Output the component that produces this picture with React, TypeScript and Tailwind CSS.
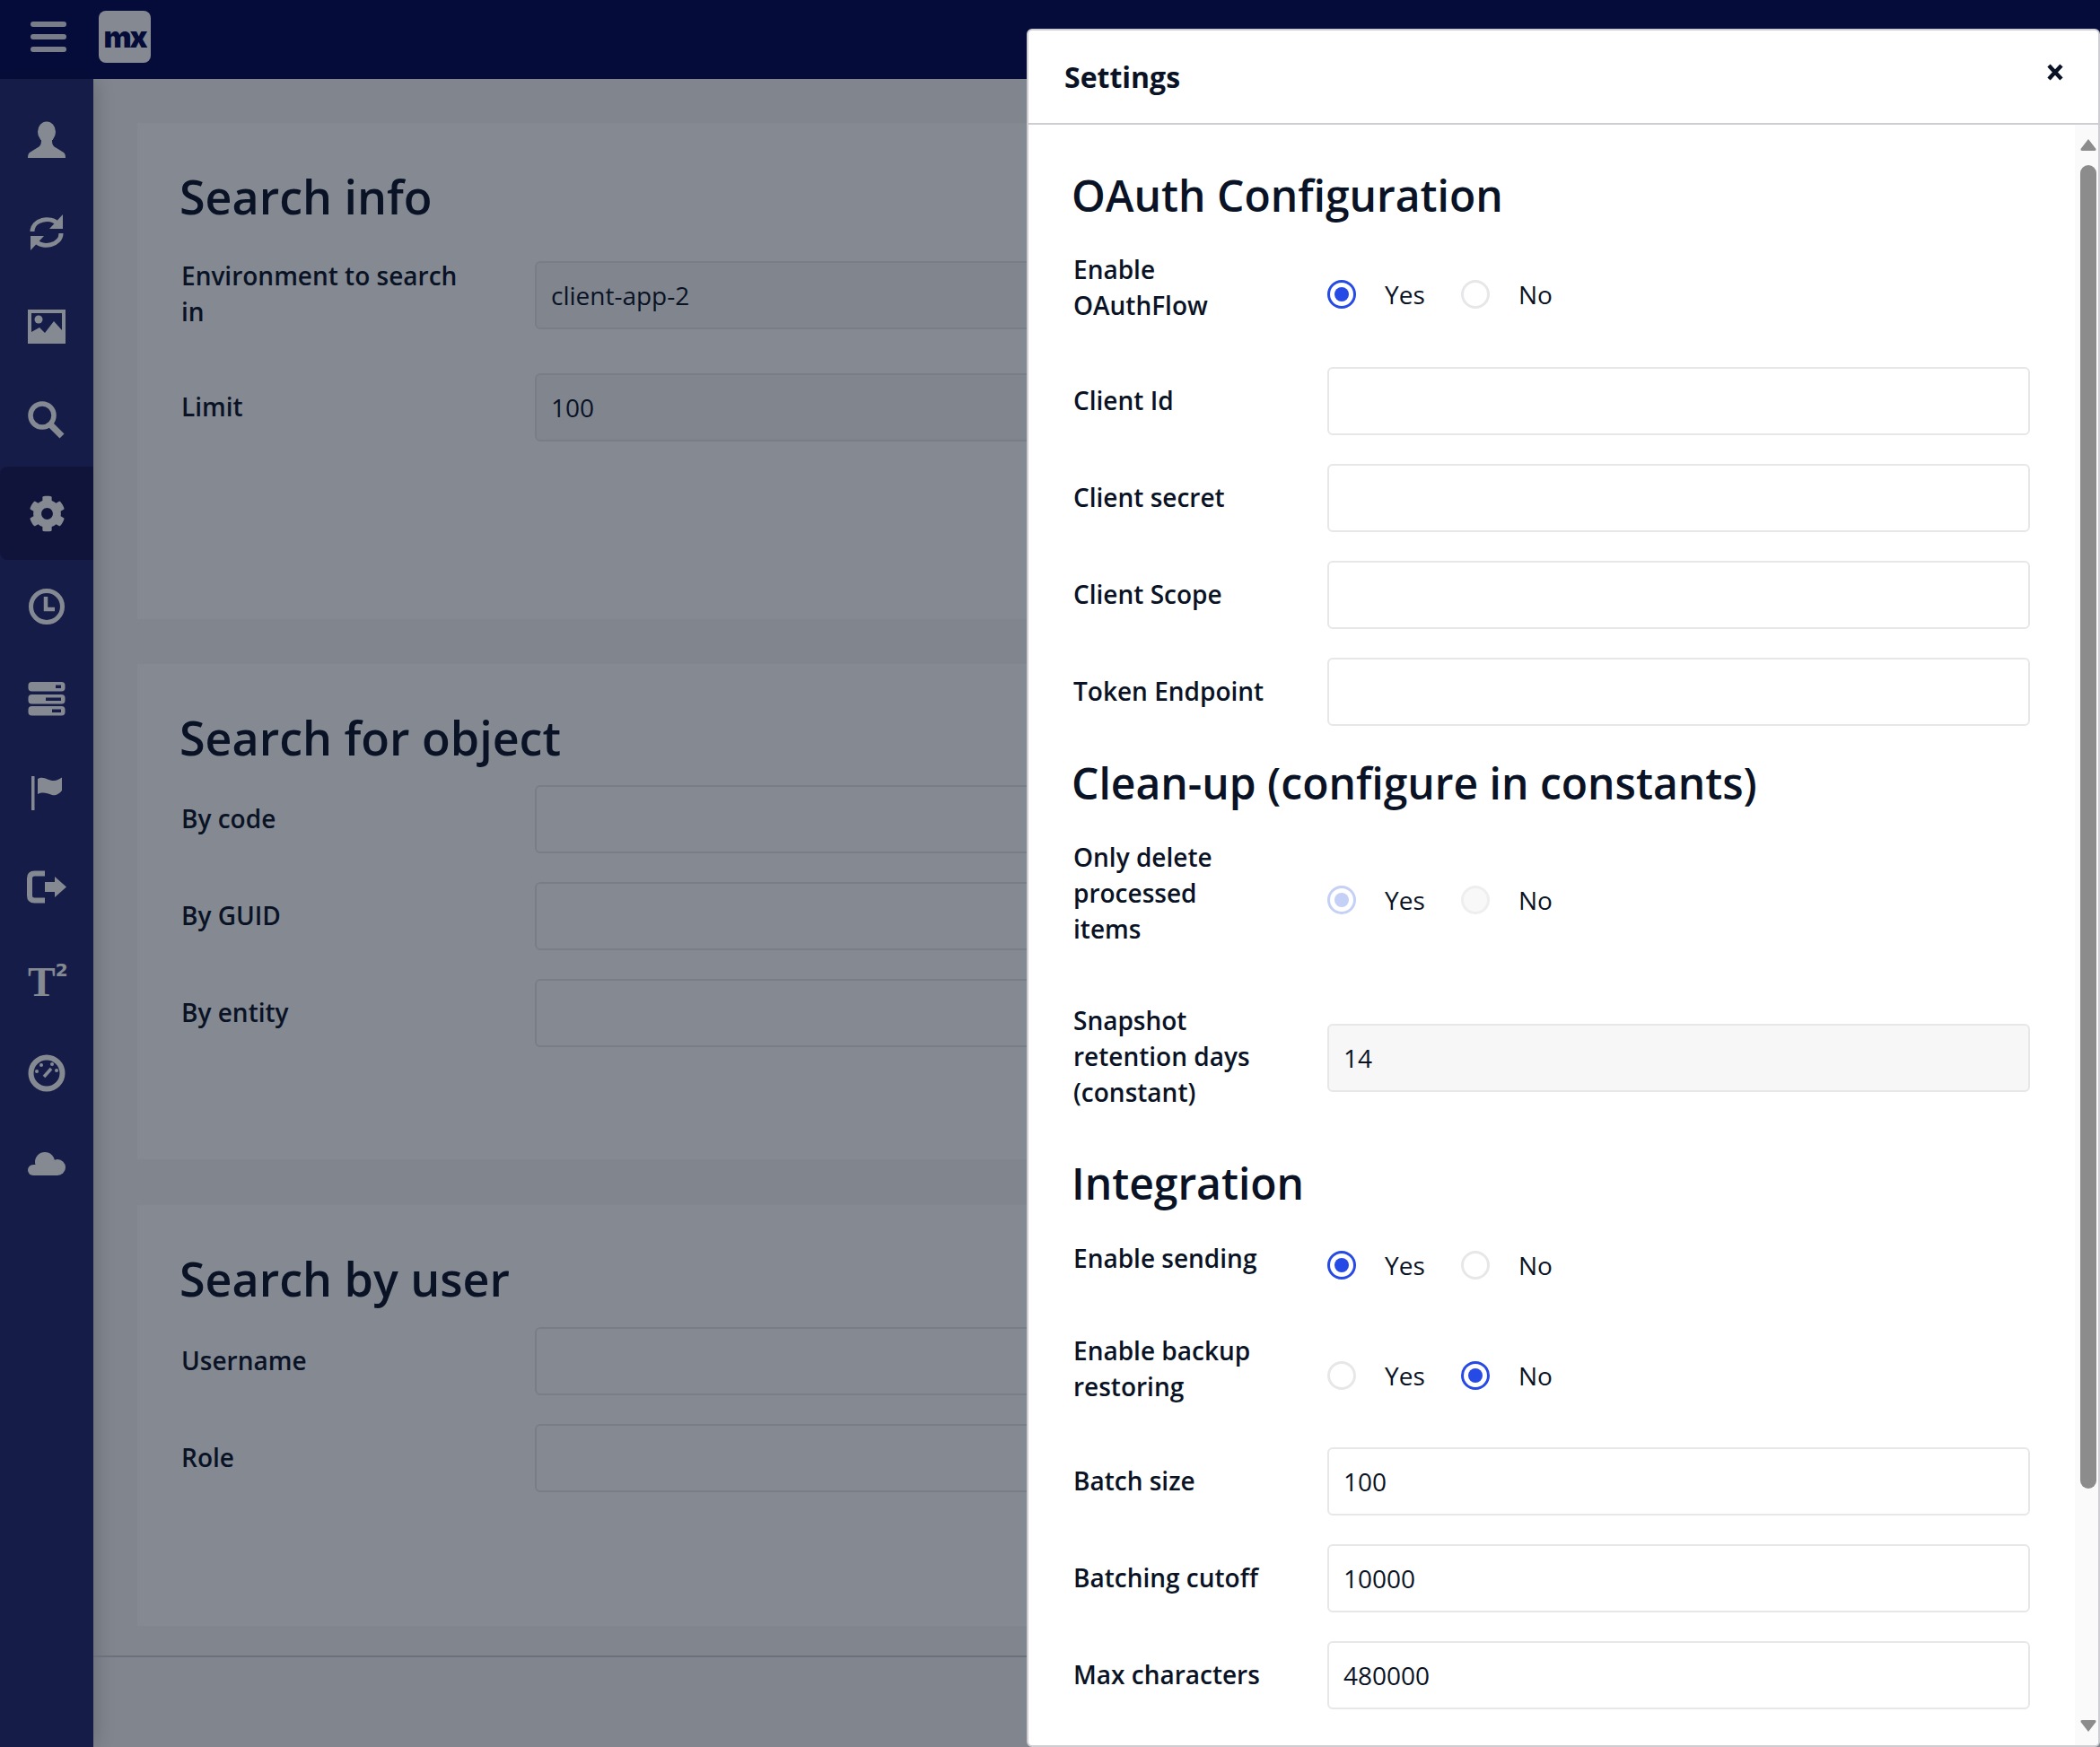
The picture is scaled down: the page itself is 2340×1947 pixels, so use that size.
import React from 'react';
import { FaCog } from 'react-icons/fa';

const SLOT = '#22256b';

function UserIcon() {
  return (
    <svg width="42" height="42" viewBox="0 0 42 42" fill="currentColor">
      <ellipse cx="21" cy="12" rx="10" ry="11.5" />
      <path d="M15 21C15 26 14 28 10 30L2 35Q0 36.500 0 41H42Q42 36.500 40 35L32 30C28 28 27 26 27 21Z" />
    </svg>
  );
}

function SyncIcon() {
  return (
    <svg width="42" height="42" viewBox="0 0 42 42" fill="currentColor">
      <path d="M5 19C5 6 25 1 34 11" fill="none" stroke="currentColor" strokeWidth="5" />
      <path d="M39 0V16H24Z" />
      <path d="M37 21C37 34 17 39 8 29" fill="none" stroke="currentColor" strokeWidth="5" />
      <path d="M3 40V24H18Z" />
    </svg>
  );
}

function PictureIcon() {
  return (
    <svg width="42" height="42" viewBox="0 0 42 42" fill="currentColor">
      <path fillRule="evenodd" d="M0 2H42V40H0ZM4 6V35H38V6Z" />
      <circle cx="12" cy="13" r="4.500" />
      <path d="M4 27L13 22L19 28L29 15L38 25V35H4Z" />
    </svg>
  );
}

function SearchIcon() {
  return (
    <svg width="42" height="42" viewBox="0 0 42 42" fill="currentColor">
      <circle cx="16" cy="16" r="13" fill="none" stroke="currentColor" strokeWidth="5.500" />
      <path d="M26 27L38 39" fill="none" stroke="currentColor" strokeWidth="7" />
    </svg>
  );
}

function ClockIcon() {
  return (
    <svg width="42" height="42" viewBox="0 0 42 42" fill="currentColor">
      <circle cx="21" cy="21" r="17.500" fill="none" stroke="currentColor" strokeWidth="5" />
      <path d="M20 10V24H30" fill="none" stroke="currentColor" strokeWidth="4.500" />
    </svg>
  );
}

function ServerIcon() {
  const rows = [
    { y: 1, slot: 31, w: 6 },
    { y: 15, slot: 20, w: 17 },
    { y: 28, slot: 27, w: 10 },
  ];
  return (
    <svg width="42" height="42" viewBox="0 0 42 42" fill="currentColor">
      {rows.map((r) => (
        <g key={r.y}>
          <rect x="0.500" y={r.y} width="41" height="10.500" rx="4" />
          <rect x={r.slot} y={r.y + 3.5} width={r.w} height="3.500" fill={SLOT} />
        </g>
      ))}
    </svg>
  );
}

function FlagIcon() {
  return (
    <svg width="42" height="42" viewBox="0 0 42 42" fill="currentColor">
      <rect x="4" y="2" width="3.500" height="38" />
      <path d="M11 5C18 1 23 8 30 7C33 6.500 35 5.500 38 3.500V18C35 22 31 24 27 23C21 21 17 19 11 22Z" />
    </svg>
  );
}

function LogoutIcon() {
  return (
    <svg width="44" height="42" viewBox="0 0 44 42" fill="currentColor">
      <path d="M20 6.500H8.500Q3 6.500 3 12V31Q3 36.500 8.500 36.500H20" fill="none" stroke="currentColor" strokeWidth="6" />
      <path d="M20 16H31V10L44 21.500L31 33V27H20Z" />
    </svg>
  );
}

function DashboardIcon() {
  return (
    <svg width="42" height="42" viewBox="0 0 42 42" fill="currentColor">
      <circle cx="21" cy="21" r="17.500" fill="none" stroke="currentColor" strokeWidth="6" />
      <circle cx="10" cy="19" r="2" />
      <circle cx="15" cy="12" r="2" />
      <circle cx="27" cy="11" r="2" />
      <circle cx="32" cy="18" r="2" />
      <path d="M18 25L26 16" fill="none" stroke="currentColor" strokeWidth="3.500" />
    </svg>
  );
}

function CloudIcon() {
  return (
    <svg width="42" height="42" viewBox="0 0 42 42" fill="currentColor">
      <circle cx="19" cy="16" r="11" />
      <circle cx="33" cy="22" r="9" />
      <circle cx="6" cy="25" r="6" />
      <rect x="6" y="19" width="27" height="12" />
    </svg>
  );
}

function TextSizeIcon() {
  return (
    <div className="flex h-[42px] w-[42px] items-start justify-between">
      <span className="font-['Liberation_Serif'] text-[46px] leading-[48px] font-bold">T</span>
      <span className="font-['DejaVu_Sans'] text-[20px] leading-[20px] font-bold">2</span>
    </div>
  );
}

const navItems = [
  { id: 'user', icon: <UserIcon /> },
  { id: 'sync', icon: <SyncIcon /> },
  { id: 'picture', icon: <PictureIcon /> },
  { id: 'search', icon: <SearchIcon /> },
  { id: 'settings', icon: <FaCog size={41} />, active: true },
  { id: 'clock', icon: <ClockIcon /> },
  { id: 'server', icon: <ServerIcon /> },
  { id: 'flag', icon: <FlagIcon /> },
  { id: 'logout', icon: <LogoutIcon /> },
  { id: 'text', icon: <TextSizeIcon /> },
  { id: 'dashboard', icon: <DashboardIcon /> },
  { id: 'cloud', icon: <CloudIcon /> },
];

function PageRow({ label, value, className = '' }: { label: string; value?: string; className?: string }) {
  return (
    <div className={`flex items-center ${className}`}>
      <label className="-mt-[3px] w-[396px] shrink-0 pr-[60px] pl-[2px] leading-[40px] font-semibold">{label}</label>
      <input
        readOnly
        value={value ?? ''}
        className={`h-[76px] flex-1 rounded-md border-2 border-[#e7e7e9] px-4 outline-none ${value ? 'bg-[#f7f7f7]' : 'bg-white'}`}
      />
    </div>
  );
}

function Radio({ checked, disabled }: { checked?: boolean; disabled?: boolean }) {
  const ring = checked
    ? disabled
      ? 'border-[#c4d0f5]'
      : 'border-[#264ae5]'
    : disabled
      ? 'border-[#eeeeee] bg-[#f8f8f8]'
      : 'border-[#e7e7e9]';
  return (
    <span className={`flex h-8 w-8 items-center justify-center rounded-full border-[3px] ${ring}`}>
      {checked && <span className={`h-4 w-4 rounded-full ${disabled ? 'bg-[#c4d0f5]' : 'bg-[#264ae5]'}`} />}
    </span>
  );
}

function YesNo({ value, disabled }: { value: 'yes' | 'no'; disabled?: boolean }) {
  return (
    <div className="flex items-center pt-[13px]">
      <div className="flex w-[149px] items-center gap-8">
        <Radio checked={value === 'yes'} disabled={disabled} />
        <span>Yes</span>
      </div>
      <div className="flex items-center gap-8">
        <Radio checked={value === 'no'} disabled={disabled} />
        <span>No</span>
      </div>
    </div>
  );
}

function FormRow({ label, className = '', children }: { label: React.ReactNode; className?: string; children: React.ReactNode }) {
  return (
    <div className={`flex items-center ${className}`}>
      <label className="-mt-[3px] w-[285px] shrink-0 pr-[60px] pl-[2px] leading-[40px] font-semibold">{label}</label>
      <div className="flex-1">{children}</div>
    </div>
  );
}

function TextInput({ value = '', disabled }: { value?: string; disabled?: boolean }) {
  return (
    <input
      readOnly
      value={value}
      className={`block h-[76px] w-full rounded-md border-2 border-[#e7e7e9] px-4 outline-none ${disabled ? 'bg-[#f7f7f7]' : 'bg-white'}`}
    />
  );
}

function Heading({ children, className = '' }: { children: React.ReactNode; className?: string }) {
  return <h2 className={`text-[48px] leading-[60px] font-semibold ${className}`}>{children}</h2>;
}

function PageHeading({ children, className = '' }: { children: React.ReactNode; className?: string }) {
  return <h2 className={`text-[52px] leading-[60px] font-semibold ${className}`}>{children}</h2>;
}

export default function App() {
  return (
    <div className="relative flex h-screen flex-col overflow-hidden bg-[#f7f7f7] font-['Open_Sans',sans-serif] text-[28px] text-[#0a1325]">
      {/* Top bar */}
      <header className="flex h-[88px] shrink-0 items-center bg-[#00054f]">
        <div className="ml-[34px] flex w-10 flex-col gap-2 pb-[6px]">
          <span className="h-1.5 rounded-sm bg-white/90" />
          <span className="h-1.5 rounded-sm bg-white/90" />
          <span className="h-1.5 rounded-sm bg-white/90" />
        </div>
        <div className="mb-[6px] ml-9 flex h-[58px] w-[58px] items-center justify-center rounded-lg bg-white font-['Inter',sans-serif] text-[33px] leading-none font-black tracking-[-2px] text-[#00054f]">
          mx
        </div>
      </header>

      <div className="flex min-h-0 flex-1">
        {/* Sidebar */}
        <nav className="flex w-[104px] shrink-0 flex-col bg-[#22256b] pt-4 text-white shadow-[0_0_24px_rgba(0,0,0,0.25)]">
          {navItems.map((item) => (
            <div
              key={item.id}
              className={`flex h-[104px] items-center justify-center ${item.active ? 'rounded-l-lg bg-[#18154f]' : ''}`}
            >
              {item.icon}
            </div>
          ))}
        </nav>

        {/* Page behind the dialog */}
        <main className="flex min-w-0 flex-1 flex-col pt-[49px]">
          <div className="flex flex-col pr-8 pl-[49px]">
            <section className="h-[553px] bg-white pt-[52px] pr-10 pl-[47px]">
              <PageHeading className="mb-[41px]">Search info</PageHeading>
              <PageRow label="Environment to search in" value="client-app-2" className="mb-[49px]" />
              <PageRow label="Limit" value="100" />
            </section>
            <section className="mt-[50px] h-[552px] bg-white pt-[52px] pr-10 pl-[47px]">
              <PageHeading className="mb-[23px]">Search for object</PageHeading>
              <PageRow label="By code" className="mb-8" />
              <PageRow label="By GUID" className="mb-8" />
              <PageRow label="By entity" />
            </section>
            <section className="mt-[51px] h-[469px] bg-white pt-[52px] pr-10 pl-[47px]">
              <PageHeading className="mb-6">Search by user</PageHeading>
              <PageRow label="Username" className="mb-8" />
              <PageRow label="Role" />
            </section>
          </div>
          <div className="mt-[33px] border-t-2 border-[#cecdd4]" />
        </main>
      </div>

      {/* Dimmed backdrop */}
      <div className="absolute inset-0 bg-[#0a1325]/50" />

      {/* Settings dialog */}
      <div className="absolute top-8 right-0 bottom-0 left-[1144px] flex flex-col overflow-hidden rounded-md border-2 border-[#cecdd4] bg-white">
        <div className="flex h-[105px] shrink-0 items-center justify-between border-b-2 border-[#cecdd4] pr-[39px] pl-10">
          <h1 className="text-[32px] font-bold">Settings</h1>
          <svg width="18" height="19" viewBox="0 0 18 19" className="mb-[11px]">
            <path d="M2 2L16 17M16 2L2 17" stroke="#0a1325" strokeWidth="4.500" fill="none" />
          </svg>
        </div>

        <div className="flex min-h-0 flex-1">
          <div className="min-w-0 flex-1 overflow-hidden pt-[49px] pr-[50px] pl-[48px]">
            <Heading className="mb-[35px]">OAuth Configuration</Heading>
            <FormRow label="Enable OAuthFlow" className="mb-[49px]">
              <YesNo value="yes" />
            </FormRow>
            <FormRow label="Client Id" className="mb-8">
              <TextInput />
            </FormRow>
            <FormRow label="Client secret" className="mb-8">
              <TextInput />
            </FormRow>
            <FormRow label="Client Scope" className="mb-8">
              <TextInput />
            </FormRow>
            <FormRow label="Token Endpoint" className="mb-[34px]">
              <TextInput />
            </FormRow>

            <Heading className="mb-[35px]">Clean-up (configure in constants)</Heading>
            <FormRow
              label={
                <>
                  Only delete processed
                  <br />
                  items
                </>
              }
              className="mb-[65px]"
            >
              <YesNo value="yes" disabled />
            </FormRow>
            <FormRow label="Snapshot retention days (constant)" className="mb-[52px]">
              <TextInput value="14" disabled />
            </FormRow>

            <Heading className="mb-[27px]">Integration</Heading>
            <FormRow label="Enable sending" className="mb-[57px]">
              <YesNo value="yes" />
            </FormRow>
            <FormRow label="Enable backup restoring" className="mb-12">
              <YesNo value="no" />
            </FormRow>
            <FormRow label="Batch size" className="mb-8">
              <TextInput value="100" />
            </FormRow>
            <FormRow label="Batching cutoff" className="mb-8">
              <TextInput value="10000" />
            </FormRow>
            <FormRow label="Max characters" className="mb-8">
              <TextInput value="480000" />
            </FormRow>
          </div>

          {/* Scrollbar */}
          <div className="flex w-[26px] shrink-0 flex-col bg-[#fafafa] pt-[15px] pr-0.5 pb-[14px] pl-1.5">
            <svg width="18" height="14" viewBox="0 0 18 14" className="shrink-0">
              <path d="M9 1L17.500 12Q18 14 16 14H2Q0 14 0.500 12Z" fill="#8c8c8c" />
            </svg>
            <div className="mt-4 h-[1475px] shrink-0 rounded-full bg-[#8c8c8c]" />
            <svg width="18" height="14" viewBox="0 0 18 14" className="mt-auto shrink-0">
              <path d="M9 13L17.500 2Q18 0 16 0H2Q0 0 0.500 2Z" fill="#8c8c8c" />
            </svg>
          </div>
        </div>
      </div>
    </div>
  );
}
